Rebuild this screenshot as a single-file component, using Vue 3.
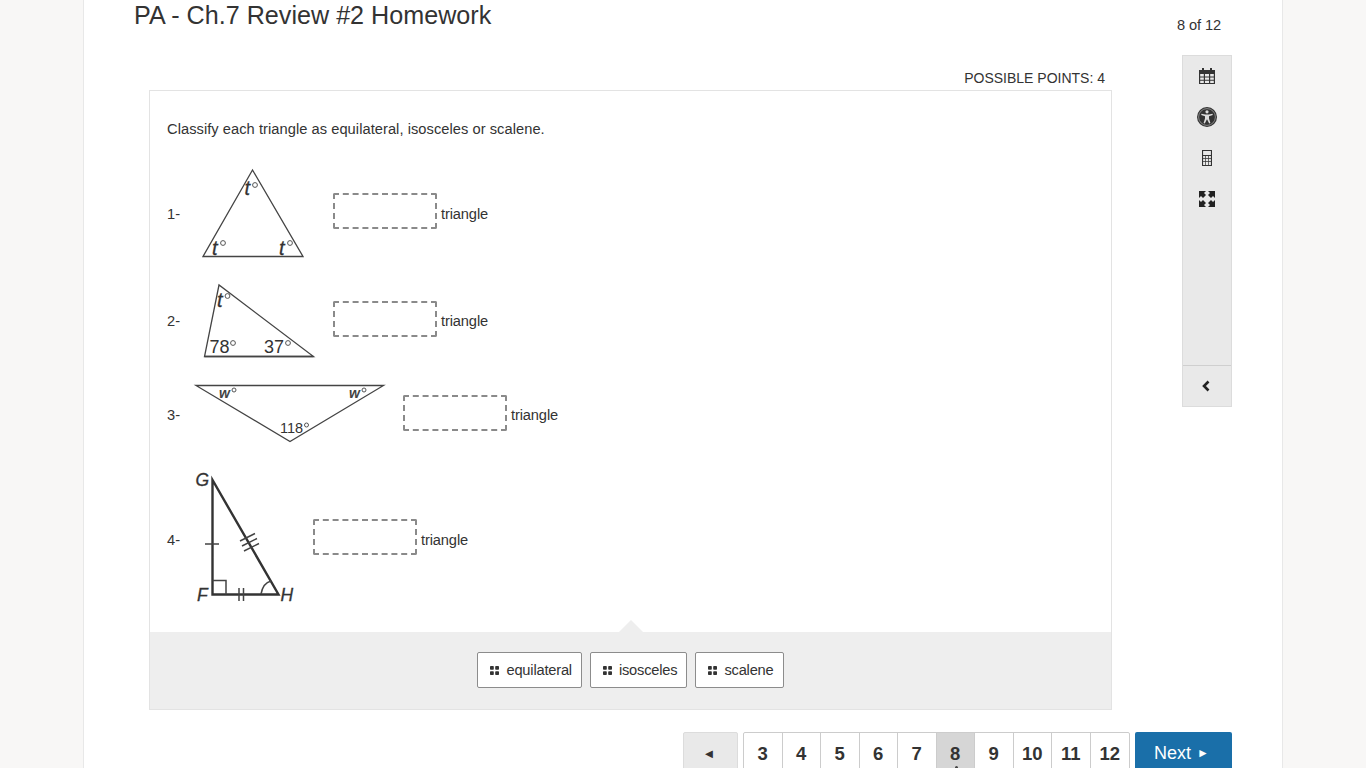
<template>
  <div class="page">
    <div class="head">
      <h1>PA - Ch.7 Review #2 Homework</h1>
      <span class="count">8 of 12</span>
    </div>

    <div class="body">
      <div class="main">
        <div class="points">POSSIBLE POINTS: 4</div>
        <div class="card">
          <div class="question">
            <p class="prompt">Classify each triangle as equilateral, isosceles or scalene.</p>

            <div class="rows">
              <div class="row">
                <span class="num">1-</span>
                <svg class="pic" width="118" height="92" viewBox="195 168 118 92">
                  <path class="thin" d="M252.5 170 L203 256.5 H303 Z" />
                  <text class="it" x="244.5" y="195">t</text>
                  <circle class="deg" cx="255" cy="185" r="2.4" />
                  <text class="it" x="212" y="254.5">t</text>
                  <circle class="deg" cx="223" cy="243" r="2.4" />
                  <text class="it" x="279" y="254.5">t</text>
                  <circle class="deg" cx="290" cy="243" r="2.4" />
                </svg>
                <span class="box high"></span>
                <span class="word">triangle</span>
              </div>

              <div class="row">
                <span class="num">2-</span>
                <svg class="pic" width="118" height="74" viewBox="195 284 118 74">
                  <path class="thin" d="M219 285 L204.5 356.5 H313.5 Z" />
                  <path class="mid" d="M204.5 356.5 H313.5" />
                  <text class="it" x="217" y="307">t</text>
                  <circle class="deg" cx="227.5" cy="296" r="2.4" />
                  <text class="num-label" x="209.5" y="353">78</text>
                  <circle class="deg" cx="233" cy="343" r="2.4" />
                  <text class="num-label" x="264" y="353">37</text>
                  <circle class="deg" cx="288" cy="343" r="2.4" />
                </svg>
                <span class="box"></span>
                <span class="word">triangle</span>
              </div>

              <div class="row">
                <span class="num">3-</span>
                <svg class="pic wide" width="188" height="66" viewBox="195 382 188 66">
                  <path class="thin" d="M196 385.5 H383.5 L290 441.5 Z" />
                  <text class="it small" x="219" y="398">w</text>
                  <circle class="deg" cx="234" cy="390" r="2" />
                  <text class="it small" x="349" y="398">w</text>
                  <circle class="deg" cx="364" cy="390" r="2" />
                  <text class="num-label small" x="280" y="433">118</text>
                  <circle class="deg" cx="306.5" cy="425" r="2" />
                </svg>
                <span class="box"></span>
                <span class="word">triangle</span>
              </div>

              <div class="row">
                <span class="num">4-</span>
                <svg class="pic narrow" width="98" height="136" viewBox="195 472 98 136">
                  <path class="thick" d="M212.5 480 V594.5 H278.5 Z" />
                  <path class="mid" d="M212.5 580.5 H226 V594.5" />
                  <path class="mid" d="M205 544 H219 M239 588 V601 M243.5 588 V601" />
                  <path class="mid" d="M241 536 L256 528.5 M243 541 L258 533.5 M245 546 L260 538.5" transform="translate(-1 5)" />
                  <path class="mid" d="M261 594 Q263 583 271 581" />
                  <text class="it big" x="195.5" y="486">G</text>
                  <text class="it big" x="197" y="600.5">F</text>
                  <text class="it big" x="280.5" y="600.5">H</text>
                </svg>
                <span class="box high"></span>
                <span class="word">triangle</span>
              </div>
            </div>
          </div>

          <div class="tray">
            <div v-for="c in choices" :key="c" class="chip">
              <svg class="dots" width="9" height="9" viewBox="0 0 9 9">
                <rect x="0" y="0" width="3.8" height="3.8" rx="0.8" />
                <rect x="5.2" y="0" width="3.8" height="3.8" rx="0.8" />
                <rect x="0" y="5.2" width="3.8" height="3.8" rx="0.8" />
                <rect x="5.2" y="5.2" width="3.8" height="3.8" rx="0.8" />
              </svg>
              {{ c }}
            </div>
          </div>
        </div>
      </div>

      <div class="side">
        <div class="tools">
          <!-- calendar -->
          <div class="tool">
            <svg width="18" height="18" viewBox="0 0 18 18">
              <path fill="#333" d="M1 3h16v14H1z" />
              <path fill="#e9e9e9" d="M2.2 7h3.6v2.4H2.2zM7 7h4v2.4H7zM12.2 7h3.6v2.4h-3.6zM2.2 10.4h3.6v2.4H2.2zM7 10.4h4v2.4H7zM12.2 10.4h3.6v2.4h-3.6zM2.2 13.8h3.6v2.2H2.2zM7 13.8h4V16H7zM12.2 13.8h3.6V16h-3.6z" />
              <path fill="#333" d="M4 1h2v3H4zM12 1h2v3h-2z" />
            </svg>
          </div>
          <!-- accessibility -->
          <div class="tool">
            <svg width="22" height="22" viewBox="0 0 22 22">
              <circle cx="11" cy="11" r="10" fill="#333" />
              <circle cx="11" cy="11" r="8.4" fill="none" stroke="#aaa" stroke-width="0.7" />
              <circle cx="11" cy="5.8" r="1.6" fill="#ddd" />
              <path fill="#ddd" d="M5.5 7.8 L9.2 8.6 H12.8 L16.5 7.8 L16.8 9 L13 10.2 V12.6 L14.4 17 L13.2 17.4 L11.2 13.4 H10.8 L8.8 17.4 L7.6 17 L9 12.6 V10.2 L5.2 9 Z" />
            </svg>
          </div>
          <!-- calculator -->
          <div class="tool">
            <svg width="12" height="18" viewBox="0 0 12 18">
              <path fill="#333" fill-rule="evenodd" d="M1 1h10v16H1zM2.1 2.1v3.8h7.8V2.1zM2.1 7v2.2h2.2V7zM5 7v2.2h2V7zM7.7 7v2.2h2.2V7zM2.1 10v2.2h2.2V10zM5 10v2.2h2V10zM7.7 10v2.2h2.2V10zM2.1 13v2.9h2.2V13zM5 13v2.9h2V13zM7.7 13v2.9h2.2V13z" />
            </svg>
          </div>
          <!-- expand -->
          <div class="tool">
            <svg width="18" height="18" viewBox="0 0 18 18">
              <path fill="#222" d="M1 1h7L6 3 8 5 5 8 3 6 1 8zM17 1v7l-2-2-2 2-3-3 2-2-2-2zM1 17v-7l2 2 2-2 3 3-2 2 2 2zM17 17h-7l2-2-2-2 3-3 2 2 2-2z" />
            </svg>
          </div>
        </div>
        <div class="collapse">
          <svg width="10" height="12" viewBox="0 0 10 12">
            <path d="M7.5 1.5 L3 6 L7.5 10.5" fill="none" stroke="#222" stroke-width="2.6" />
          </svg>
        </div>
      </div>
    </div>

    <div class="pager">
      <div class="prev">◄</div>
      <div class="pages">
        <div v-for="p in pages" :key="p" class="pg" :class="{ current: p === 8, last: p === 12 }">{{ p }}</div>
      </div>
      <div class="next">Next <span class="arrow">►</span></div>
    </div>
  </div>
</template>

<script setup>
const choices = ['equilateral', 'isosceles', 'scalene']
const pages = [3, 4, 5, 6, 7, 8, 9, 10, 11, 12]
</script>

<style>
html, body {
  margin: 0;
  height: 768px;
  overflow: hidden;
  background: #f8f7f6;
}
</style>

<style scoped>
.page {
  box-sizing: border-box;
  width: 1200px;
  height: 768px;
  margin: 0 auto;
  padding: 0 50px;
  background: #fff;
  border-left: 1px solid #e8e8e8;
  border-right: 1px solid #e8e8e8;
  overflow: hidden;
  font-family: "Liberation Sans", Arial, sans-serif;
  font-size: 14.667px;
  color: #333;
}
.head {
  display: flex;
  justify-content: space-between;
  height: 30px;
}
h1 {
  margin: 0;
  font-size: 25.15px;
  font-weight: normal;
  line-height: 30px;
}
.count {
  padding: 16px 11px 0 0;
  line-height: 18px;
  letter-spacing: -0.1px;
}
.body {
  display: flex;
  align-items: flex-start;
  margin-top: 25px;
}
.main {
  width: 963px;
  margin-left: 15px;
}
.points {
  margin-top: 15px;
  padding-right: 7px;
  text-align: right;
  font-size: 14px;
  line-height: 17px;
}
.card {
  margin-top: 3px;
  border: 1px solid #e3e3e3;
}
.question {
  padding: 29px 17px 24px;
}
.prompt {
  margin: 0 0 30px;
  line-height: 18px;
  letter-spacing: 0.05px;
}
.rows {
  display: flex;
  flex-direction: column;
  gap: 24px;
}
.row {
  display: flex;
  align-items: center;
}
.num {
  width: 28px;
}
.word {
  letter-spacing: -0.13px;
}
.pic {
  margin-right: 20px;
  flex: none;
  overflow: visible;
}
.box {
  box-sizing: border-box;
  width: 104px;
  height: 36px;
  margin: 0 4px 5px 0;
  border: 2px dashed #8a8a8a;
  border-radius: 2px;
}
.box.high {
  margin-bottom: 6px;
}
.thin {
  fill: none;
  stroke: #444;
  stroke-width: 1.3;
}
.thick {
  fill: none;
  stroke: #333;
  stroke-width: 2.4;
}
.mid {
  fill: none;
  stroke: #444;
  stroke-width: 1.5;
}
.deg {
  fill: none;
  stroke: #555;
  stroke-width: 1;
}
.it {
  font-family: "Liberation Sans", Arial, sans-serif;
  font-style: italic;
  font-size: 20px;
  fill: #333;
  stroke: #333;
  stroke-width: 0.3;
}
.it.small {
  font-size: 14px;
  font-weight: bold;
  fill: #444;
  stroke: none;
}
.it.big {
  font-size: 17.5px;
}
.num-label {
  font-family: "Liberation Sans", Arial, sans-serif;
  font-size: 18px;
  fill: #333;
}
.num-label.small {
  font-size: 14.5px;
}
.tray {
  position: relative;
  display: flex;
  justify-content: center;
  gap: 8px;
  padding: 20px 0 21px;
  background: #eee;
}
.tray::before {
  content: "";
  position: absolute;
  left: 469px;
  top: -12px;
  border-left: 12px solid transparent;
  border-right: 12px solid transparent;
  border-bottom: 12px solid #eee;
}
.chip {
  display: flex;
  align-items: center;
  gap: 7px;
  box-sizing: border-box;
  height: 36px;
  padding: 0 9px 0 11px;
  background: #fff;
  border: 1px solid #8c8c8c;
  border-radius: 2px;
  letter-spacing: -0.2px;
}
.dots {
  margin-left: 1px;
  fill: #333;
}
.side {
  box-sizing: border-box;
  width: 50px;
  height: 352px;
  margin-left: 70px;
  display: flex;
  flex-direction: column;
  background: #e9e9e9;
  border: 1px solid #dcdcdc;
}
.tools {
  flex: 1;
}
.tool {
  box-sizing: border-box;
  height: 41px;
  padding-bottom: 2px;
  display: flex;
  align-items: center;
  justify-content: center;
}
.collapse {
  height: 40px;
  padding-right: 2px;
  display: flex;
  align-items: center;
  justify-content: center;
  border-top: 1px solid #cfcfcf;
}
.pager {
  display: flex;
  justify-content: flex-end;
  gap: 5px;
  margin-top: 22px;
}
.prev {
  width: 55px;
  height: 50px;
  box-sizing: border-box;
  padding-top: 12px;
  padding-right: 3px;
  text-align: center;
  font-size: 13px;
  line-height: 18px;
  background: #e9e9e9;
  border: 1px solid #dcdcdc;
  border-radius: 2px 2px 0 0;
}
.pages {
  display: flex;
  box-sizing: border-box;
  width: 387px;
  height: 50px;
  border: 1px solid #ccc;
  border-radius: 2px 2px 0 0;
}
.pg {
  position: relative;
  box-sizing: border-box;
  width: 38.5px;
  padding-top: 11px;
  text-align: center;
  font-size: 18.5px;
  font-weight: bold;
  line-height: 20px;
  border-right: 1px solid #ccc;
}
.pg.last {
  border-right: 0;
}
.pg.current {
  background: #d6d6d6;
}
.pg.current::after {
  content: "";
  position: absolute;
  left: 18px;
  top: 33px;
  width: 3px;
  height: 3px;
  border-radius: 50%;
  background: #444;
}
.next {
  width: 97px;
  height: 50px;
  box-sizing: border-box;
  padding: 10px 4px 0 0;
  text-align: center;
  font-size: 18px;
  line-height: 22px;
  color: #fff;
  background: #1a6fa9;
  border-radius: 2px 2px 0 0;
}
.arrow {
  font-size: 12px;
  vertical-align: 2px;
  margin-left: 1px;
}
</style>
